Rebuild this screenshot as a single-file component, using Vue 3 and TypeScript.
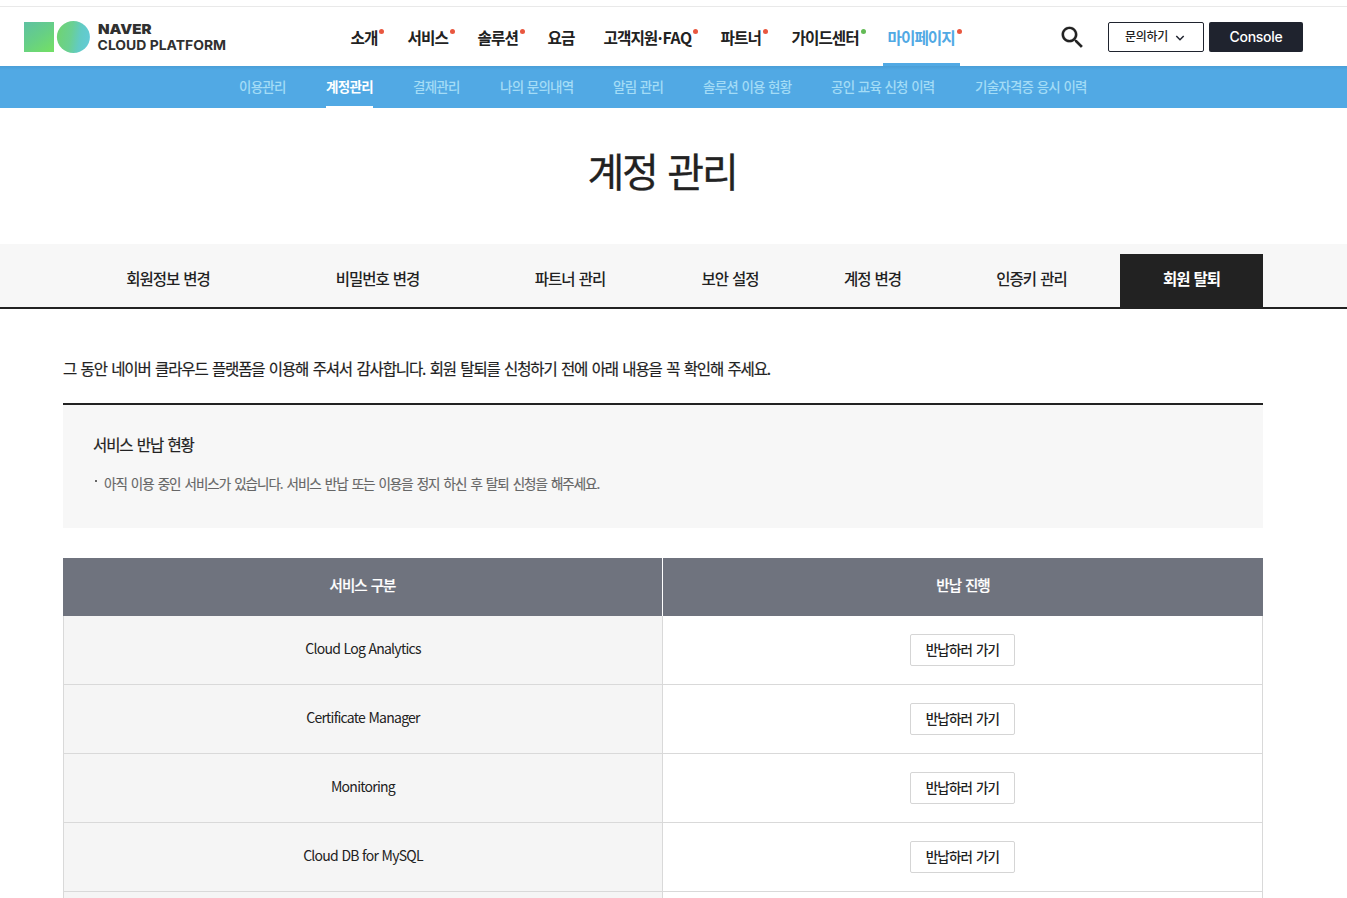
<script setup lang="ts">
interface NavItem {
  label: string
  suffix?: string
  dot?: 'red' | 'green'
  active?: boolean
}

const mainNav: NavItem[] = [
  { label: '소개', dot: 'red' },
  { label: '서비스', dot: 'red' },
  { label: '솔루션', dot: 'red' },
  { label: '요금' },
  { label: '고객지원', suffix: 'FAQ', dot: 'red' },
  { label: '파트너', dot: 'red' },
  { label: '가이드센터', dot: 'green' },
  { label: '마이페이지', dot: 'red', active: true },
]

const subNav: string[] = [
  '이용관리', '계정관리', '결제관리', '나의 문의내역',
  '알림 관리', '솔루션 이용 현황', '공인 교육 신청 이력', '기술자격증 응시 이력',
]
const activeSub = '계정관리'

const tabs: string[] = [
  '회원정보 변경', '비밀번호 변경', '파트너 관리', '보안 설정',
  '계정 변경', '인증키 관리', '회원 탈퇴',
]
const activeTab = '회원 탈퇴'

const services: string[] = ['Cloud Log Analytics', 'Certificate Manager', 'Monitoring', 'Cloud DB for MySQL', '']
</script>

<template>
  <div class="page">
    <header class="header">
      <svg class="logo" width="210" height="40" viewBox="0 0 210 40">
        <defs>
          <linearGradient id="sq" x1="0.1" y1="0" x2="0.8" y2="1">
            <stop offset="0" stop-color="#5fc2a0" />
            <stop offset="0.5" stop-color="#66cf86" />
            <stop offset="1" stop-color="#72de68" />
          </linearGradient>
          <linearGradient id="ci" x1="0" y1="0.4" x2="1" y2="0.55">
            <stop offset="0" stop-color="#6fd373" />
            <stop offset="0.42" stop-color="#6ad093" />
            <stop offset="0.7" stop-color="#62cbc4" />
            <stop offset="1" stop-color="#63cbd6" />
          </linearGradient>
        </defs>
        <rect x="0" y="5" width="30" height="30" fill="url(#sq)" />
        <ellipse cx="49.4" cy="20" rx="16.5" ry="16" fill="url(#ci)" />
        <text class="brand heavy" x="74" y="17.3" textLength="53.5" lengthAdjust="spacingAndGlyphs">NAVER</text>
        <text class="brand platform" x="73.6" y="32.8" textLength="128.4" lengthAdjust="spacingAndGlyphs">CLOUD PLATFORM</text>
      </svg>
      <nav class="main-nav">
        <a v-for="item in mainNav" :key="item.label" class="main-item" :class="{ active: item.active }">
          <span class="main-label">{{ item.label }}<template v-if="item.suffix"><span class="middot">·</span><span class="suffix">{{ item.suffix }}</span></template><i v-if="item.dot" class="dot" :class="item.dot"></i></span>
        </a>
      </nav>
      <svg class="search" width="29" height="29" viewBox="0 0 24 24">
        <path fill="#222" stroke="#222" stroke-width="0.15" d="M15.5 14h-.79l-.28-.27C15.41 12.59 16 11.11 16 9.5 16 5.91 13.09 3 9.5 3S3 5.91 3 9.5 5.91 16 9.5 16c1.61 0 3.09-.59 4.23-1.57l.27.28v.79l5 4.99L20.49 19l-4.99-5zm-6 0C7.01 14 5 11.99 5 9.5S7.01 5 9.5 5 14 7.01 14 9.5 11.99 14 9.5 14z" />
      </svg>
      <button class="inquiry">
        <span>문의하기</span>
        <svg width="10" height="8" viewBox="0 0 10 8"><path d="M1.3 2 L5 5.7 L8.7 2" fill="none" stroke="#1f232e" stroke-width="1.5" /></svg>
      </button>
      <button class="console">Console</button>
    </header>

    <nav class="sub-nav">
      <a v-for="s in subNav" :key="s" class="sub-item"><span :class="{ active: s === activeSub }">{{ s }}</span></a>
    </nav>

    <h1 class="title">계정 관리</h1>

    <div class="tabs">
      <a v-for="t in tabs" :key="t" class="tab" :class="{ active: t === activeTab }">{{ t }}</a>
    </div>

    <main class="content">
      <p class="intro">그 동안 네이버 클라우드 플랫폼을 이용해 주셔서 감사합니다. 회원 탈퇴를 신청하기 전에 아래 내용을 꼭 확인해 주세요.</p>
      <section class="notice">
        <h2>서비스 반납 현황</h2>
        <p class="bullet">아직 이용 중인 서비스가 있습니다. 서비스 반납 또는 이용을 정지 하신 후 탈퇴 신청을 해주세요.</p>
      </section>
      <div class="table">
        <div class="row head">
          <div class="cell name">서비스 구분</div>
          <div class="cell">반납 진행</div>
        </div>
        <div v-for="(s, i) in services" :key="i" class="row">
          <div class="cell name">{{ s }}</div>
          <div class="cell action"><button v-if="s" class="return">반납하러 가기</button></div>
        </div>
      </div>
    </main>
  </div>
</template>

<style>
html,
body {
  margin: 0;
  overflow: hidden;
  background: #fff;
}
</style>

<style scoped>
.page {
  width: 1347px;
  height: 898px;
  overflow: hidden;
  box-sizing: border-box;
  padding-top: 6px;
  background: #fff;
  color: #222;
  font-family: "Noto Sans CJK KR", sans-serif;
  white-space: nowrap;
}
button {
  font-family: inherit;
  padding: 0;
  box-sizing: border-box;
}
.header {
  height: 60px;
  box-sizing: border-box;
  border-top: 1px solid #e9e9e9;
  padding-left: 24px;
  display: flex;
  align-items: flex-start;
}
.logo {
  flex: none;
  margin-top: 10px;
}
.brand {
  font-family: Inter, sans-serif;
  font-size: 13.8px;
  font-weight: 600;
  fill: #303030;
}
.brand.heavy {
  font-weight: 900;
}
.brand.platform {
  font-size: 13.4px;
  font-weight: 700;
}
.main-nav {
  margin-left: 116.6px;
  flex: none;
  height: 59px;
  display: grid;
  grid-template-columns: 57px 70px 70px 56px 117px 71px 96px 70px;
}
.main-item {
  position: relative;
  height: 59px;
  line-height: 62px;
  font-size: 15.7px;
  font-weight: 700;
  letter-spacing: -1.02px;
}
.main-label {
  position: relative;
  display: inline-block;
}
.middot {
  margin: 0 -1.3px 0 -1.8px;
}
.suffix {
  letter-spacing: -0.4px;
}
.main-item.active {
  color: #51a9e4;
}
.main-item.active::after {
  content: "";
  position: absolute;
  left: -4.6px;
  bottom: 0;
  width: 77px;
  height: 3px;
  background: #51a9e4;
}
.dot {
  position: absolute;
  top: 22px;
  right: -7px;
  width: 5px;
  height: 5px;
  border-radius: 50%;
}
.suffix + .dot {
  right: -6px;
}
.dot.red {
  background: #e9573f;
}
.dot.green {
  background: #63bb55;
}
.search {
  flex: none;
  margin: 15.5px 0 0 100.9px;
}
.inquiry {
  margin: 15px 0 0 20.5px;
  width: 96px;
  height: 30px;
  border: 1px solid #1f232e;
  border-radius: 2px;
  background: #fff;
  color: #222;
  font-size: 12px;
  font-weight: 500;
  letter-spacing: -0.35px;
  display: flex;
  align-items: center;
  justify-content: center;
  gap: 7px;
}
.inquiry span {
  margin: -3px 0 0 -2px;
}
.inquiry svg {
  margin-top: 1px;
}
.console {
  margin: 15px 0 0 5px;
  width: 94px;
  height: 30px;
  border: 0;
  border-radius: 2px;
  background: #1f232e;
  color: #fff;
  font-family: Inter, sans-serif;
  font-size: 14px;
  font-weight: 500;
  line-height: 30px;
  letter-spacing: -0.25px;
}
.sub-nav {
  height: 42px;
  padding-left: 239px;
  background: linear-gradient(#4a9ed7, #51a9e4 4px);
  display: grid;
  grid-template-columns: 87px 87px 87px 113px 90px 128px 144px 112px;
}
.sub-item {
  height: 42px;
  line-height: 40px;
  font-size: 13.5px;
  font-weight: 500;
  letter-spacing: -0.78px;
  word-spacing: 1.2px;
  color: #a3dcf6;
}
.sub-item span {
  display: inline-block;
  height: 42px;
  box-sizing: border-box;
}
.sub-item .active {
  color: #fff;
  font-weight: 700;
  letter-spacing: -0.7px;
  border-bottom: 2px solid #fff;
}
.title {
  margin: 0;
  height: 136px;
  width: 1324px;
  line-height: 124px;
  text-align: center;
  font-size: 40px;
  font-weight: 400;
  letter-spacing: -2.2px;
  word-spacing: 4px;
  -webkit-text-stroke: 0.3px #222;
}
.tabs {
  height: 65px;
  box-sizing: border-box;
  border-bottom: 2px solid #222;
  background: #f7f7f7;
  padding: 10px 0 0 63px;
  display: grid;
  grid-template-columns: 210px 209px 176px 144px 141px 177px 143px;
}
.tab {
  height: 53px;
  line-height: 48px;
  text-align: center;
  font-size: 15.5px;
  font-weight: 500;
  letter-spacing: -1px;
  word-spacing: 1.6px;
}
.tab.active {
  background: #222;
  color: #fff;
  font-weight: 700;
}
.content {
  width: 1200px;
  margin-left: 63px;
}
.intro {
  margin: 0;
  height: 94px;
  line-height: 119px;
  font-size: 15.5px;
  letter-spacing: -1.14px;
  word-spacing: 2.1px;
  -webkit-text-stroke: 0.2px #222;
}
.notice {
  height: 125px;
  box-sizing: border-box;
  border-top: 2px solid #222;
  background: #f7f7f7;
  padding: 27px 30px 0;
}
.notice h2 {
  margin: 0;
  font-size: 15.5px;
  line-height: 24px;
  font-weight: 400;
  letter-spacing: -1.12px;
  word-spacing: 2px;
  -webkit-text-stroke: 0.2px #222;
}
.bullet {
  position: relative;
  margin: 17px 0 0;
  padding-left: 11px;
  font-size: 13.5px;
  line-height: 20px;
  color: #666;
  letter-spacing: -1.01px;
  word-spacing: 2px;
  -webkit-text-stroke: 0.15px #666;
}
.bullet::before {
  content: "";
  position: absolute;
  left: 2px;
  top: 7px;
  width: 2px;
  height: 2px;
  background: #666;
}
.table {
  margin-top: 30px;
}
.row {
  height: 69px;
  box-sizing: border-box;
  display: grid;
  grid-template-columns: 600px 600px;
  border-bottom: 1px solid #d9d9d9;
}
.cell {
  box-sizing: border-box;
  display: flex;
  align-items: center;
  justify-content: center;
  border-right: 1px solid #d9d9d9;
}
.cell.name {
  background: #f5f5f5;
  border-left: 1px solid #d9d9d9;
  font-size: 14px;
  letter-spacing: -0.75px;
  word-spacing: 1px;
  padding-bottom: 4px;
}
.row.head {
  height: 58px;
  border: 0;
}
.head .cell,
.head .cell.name {
  background: #6f737e;
  color: #fff;
  border: 0;
  font-size: 14.5px;
  font-weight: 500;
  letter-spacing: -0.95px;
  word-spacing: 1.6px;
  padding: 0 0 6px;
  -webkit-text-stroke: 0.2px #fff;
}
.head .cell.name {
  border-right: 1px solid #fff;
}
.return {
  width: 105px;
  height: 32px;
  border: 1px solid #d5d5d5;
  border-radius: 2px;
  background: #fff;
  color: #222;
  font-size: 13.5px;
  font-weight: 500;
  line-height: 28px;
  padding-bottom: 2px;
  letter-spacing: -0.85px;
  word-spacing: 1.8px;
}
</style>
